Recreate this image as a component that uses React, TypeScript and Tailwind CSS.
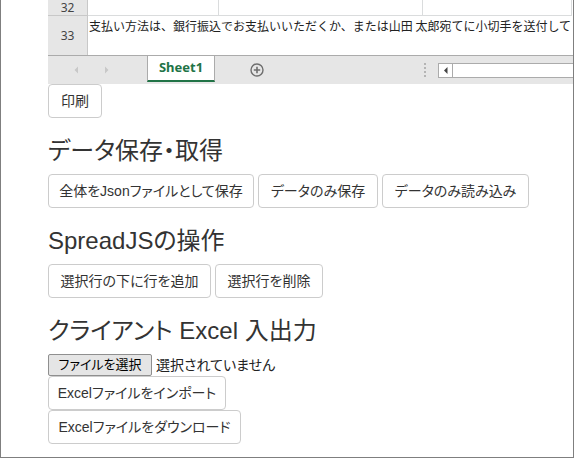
import React from "react";

const FONT = "font-['Liberation_Sans','Noto_Sans_CJK_JP',sans-serif]";

function Btn({ w, children }: { w: string; children: React.ReactNode }) {
  return (
    <div
      className={`${w} h-[34px] shrink-0 flex items-center justify-center border border-[#cccccc] rounded-[4px] bg-white text-[14px] text-[#333333] whitespace-nowrap [font-feature-settings:'palt']`}
    >
      {children}
    </div>
  );
}

function H3({ children }: { children: React.ReactNode }) {
  return (
    <div className="mt-[20px] mb-[10px] h-[26px] text-[24px] leading-[26px] text-[#333333] whitespace-nowrap [font-feature-settings:'palt']">
      {children}
    </div>
  );
}

export default function App() {
  return (
    <div
      className={`${FONT} w-[574px] h-[458px] bg-white border-l border-r border-b border-[#7f7f7f] overflow-hidden`}
    >
      <div className="pl-[47px]">
        {/* Spreadsheet */}
        <div className="w-full overflow-hidden">
          {/* row 32 */}
          <div className="flex h-[16px]">
            <div className="w-[40px] shrink-0 bg-[#e6e6e6] border-r border-b border-[#c8c8c8] flex items-center justify-center text-[12px] leading-[15px] text-[#444444] font-['Noto_Sans','Liberation_Sans',sans-serif]">
              32
            </div>
            <div className="w-[131px] shrink-0 border-r border-b border-[#dadcdd]" />
            <div className="w-[204px] shrink-0 border-r border-b border-[#dadcdd]" />
            <div className="w-[149px] shrink-0 border-r border-b border-[#dadcdd]" />
          </div>
          {/* row 33 */}
          <div className="flex h-[39px]">
            <div className="w-[40px] shrink-0 bg-[#e6e6e6] border-r border-[#c8c8c8] flex items-center justify-center text-[12px] text-[#444444] font-['Noto_Sans','Liberation_Sans',sans-serif]">
              33
            </div>
            <div className="flex-1 overflow-hidden whitespace-nowrap pl-[1px] pt-[1px] text-[12px] leading-[17px] text-[#222222] font-['Noto_Sans_CJK_JP',sans-serif]">
              支払い方法は、銀行振込でお支払いいただくか、または山田 太郎宛てに小切手を送付して
            </div>
          </div>
          {/* tab bar */}
          <div className="flex items-start h-[29px] border-t border-[#ababab] bg-[#e6e6e6]">
            <div className="w-[99px] h-[28px] shrink-0 flex items-center">
              <svg width="5" height="8" viewBox="0 0 5 8" className="ml-[26px]">
                <path d="M4 0.5 L0.5 4 L4 7.5 Z" fill="#c8c8c8" />
              </svg>
              <svg width="5" height="8" viewBox="0 0 5 8" className="ml-[25px]">
                <path d="M1 0.5 L4.5 4 L1 7.5 Z" fill="#c8c8c8" />
              </svg>
            </div>
            <div className="w-[68px] h-[26px] shrink-0 bg-white border-l border-r border-[#ababab] border-b-2 border-b-[#217346] flex items-center justify-center text-[13px] font-bold text-[#217346] font-['Noto_Sans','Liberation_Sans',sans-serif]">
              Sheet1
            </div>
            <div className="h-[28px] flex items-center ml-[35px]">
              <svg width="14" height="14" viewBox="0 0 14 14">
                <circle cx="7" cy="7" r="6" fill="none" stroke="#6e6e6e" strokeWidth="1.4" />
                <path d="M7 3.8 V10.2 M3.8 7 H10.2" stroke="#6e6e6e" strokeWidth="1.6" />
              </svg>
            </div>
            <div className="flex-1" />
            <div className="h-[28px] flex flex-col items-center justify-center gap-[2px] w-[3px]">
              <div className="w-[2px] h-[2px] bg-[#b4b4b4]" />
              <div className="w-[2px] h-[2px] bg-[#b4b4b4]" />
              <div className="w-[2px] h-[2px] bg-[#b4b4b4]" />
              <div className="w-[2px] h-[2px] bg-[#b4b4b4]" />
            </div>
            <div className="ml-[12px] mt-[7px] w-[135px] h-[15px] shrink-0 bg-white border border-r-0 border-[#ababab] flex items-stretch">
              <div className="w-[14px] border-r border-[#ababab] flex items-center justify-center">
                <svg width="4" height="7" viewBox="0 0 4 7">
                  <path d="M3.5 0 L0 3.5 L3.5 7 Z" fill="#444444" />
                </svg>
              </div>
            </div>
          </div>
        </div>

        {/* Controls */}
        <div>
          <Btn w="w-[54px]">印刷</Btn>

          <H3>データ保存・取得</H3>
          <div className="flex gap-[4px]">
            <Btn w="w-[206px]">全体をJsonファイルとして保存</Btn>
            <Btn w="w-[120px]">データのみ保存</Btn>
            <Btn w="w-[147px]">データのみ読み込み</Btn>
          </div>

          <H3>SpreadJSの操作</H3>
          <div className="flex gap-[4px]">
            <Btn w="w-[163px]">選択行の下に行を追加</Btn>
            <Btn w="w-[108px]">選択行を削除</Btn>
          </div>

          <H3>クライアント Excel 入出力</H3>
          <div className="flex items-center h-[22px]">
            <div className="w-[104px] h-[22px] flex items-center justify-center bg-[#e5e5e5] border border-[#8f8f8f] rounded-[2px] text-[13px] text-black [font-feature-settings:'palt']">
              ファイルを選択
            </div>
            <div className="ml-[4px] text-[14px] text-[#222222] [font-feature-settings:'palt']">
              選択されていません
            </div>
          </div>
          <div className="flex flex-col">
            <Btn w="w-[178px]">Excelファイルをインポート</Btn>
            <Btn w="w-[193px]">Excelファイルをダウンロード</Btn>
          </div>
        </div>
      </div>
    </div>
  );
}
